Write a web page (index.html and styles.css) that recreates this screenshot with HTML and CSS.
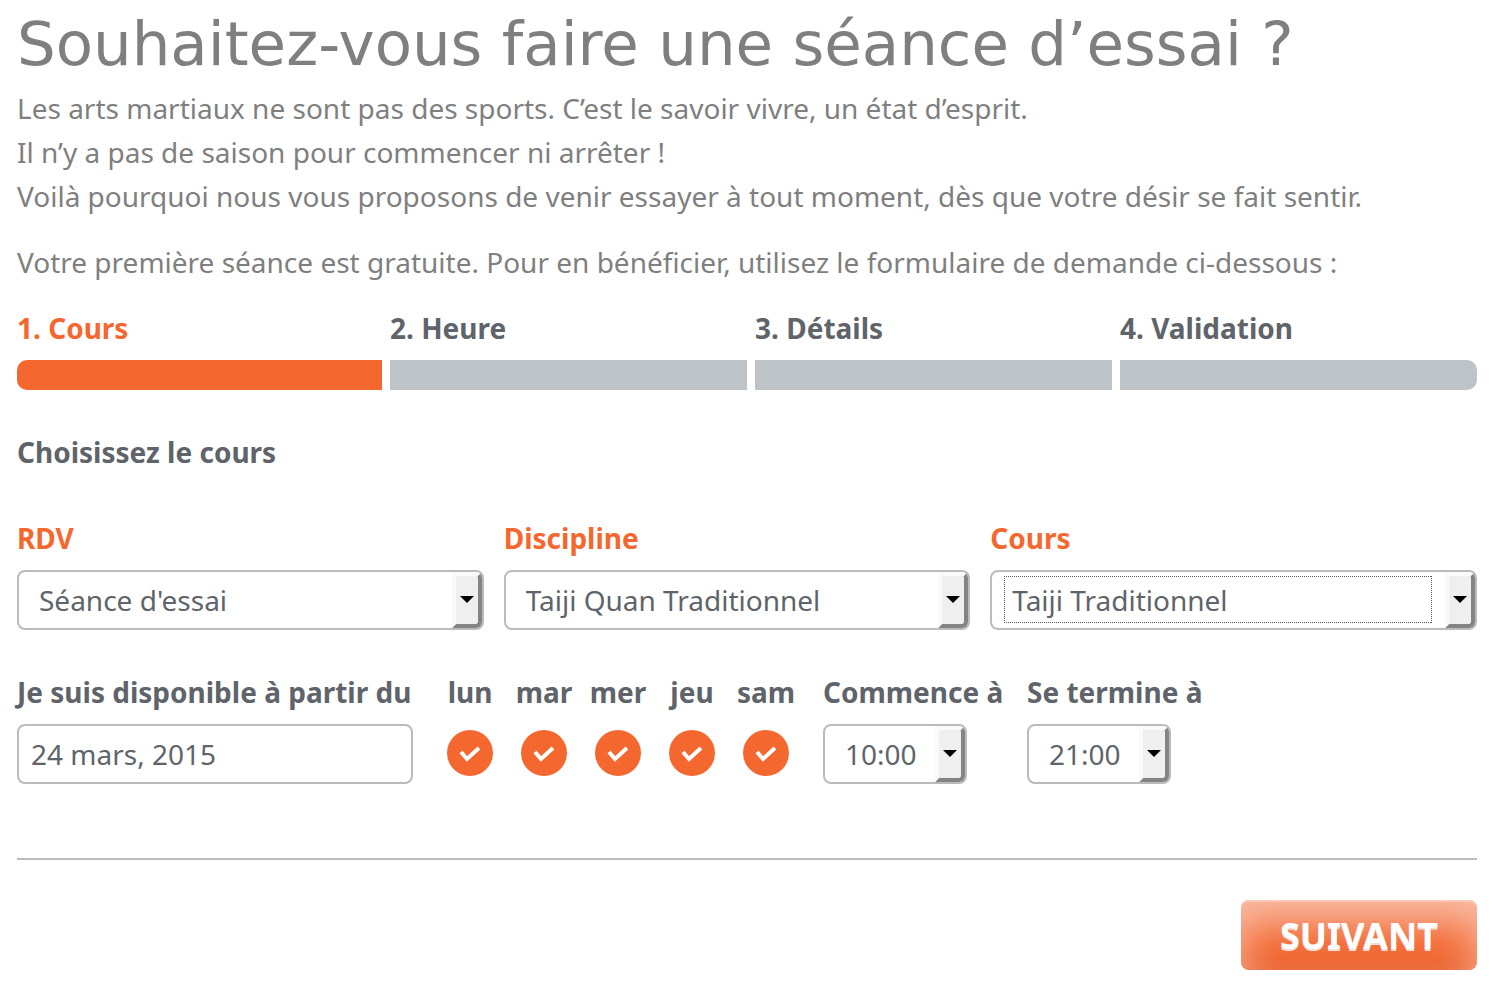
FILE: index.html
```html
<!DOCTYPE html>
<html lang="fr">

<head>
    <meta charset="UTF-8">
    <meta name="viewport" content="width=device-width, initial-scale=1.0">
    <title>Séance d'essai</title>
    <link rel="stylesheet" href="styles.css">
</head>
<body>
    <div class="container">
        <h1>Souhaitez-vous faire une séance d’essai ?</h1>
        <p>Les arts martiaux ne sont pas des sports. C’est le savoir vivre, un état d’esprit.<br>
            Il n’y a pas de saison pour commencer ni arrêter !<br>
            Voilà pourquoi nous vous proposons de venir essayer à tout moment, dès que votre désir se fait sentir.</p>
        <p>Votre première séance est gratuite. Pour en bénéficier, utilisez le formulaire de demande ci-dessous :</p>

        <form class="booking">
            <ol class="steps">
                <li class="step active">1. Cours</li>
                <li class="step">2. Heure</li>
                <li class="step">3. Détails</li>
                <li class="step">4. Validation</li>
            </ol>

            <h2>Choisissez le cours</h2>

            <div class="row">
                <div class="field">
                    <label for="service">RDV</label>
                    <div class="select">
                        <select id="service">
                            <option>Séance d'essai</option>
                        </select>
                    </div>
                </div>
                <div class="field">
                    <label for="discipline">Discipline</label>
                    <div class="select">
                        <select id="discipline">
                            <option>Taiji Quan Traditionnel</option>
                        </select>
                    </div>
                </div>
                <div class="field">
                    <label for="course">Cours</label>
                    <div class="select focused">
                        <select id="course">
                            <option>Taiji Traditionnel</option>
                        </select>
                    </div>
                </div>
            </div>

            <div class="availability">
                <div class="date">
                    <label for="date">Je suis disponible à partir du</label>
                    <input type="text" id="date" value="24 mars, 2015">
                </div>
                <div class="days">
                    <div class="day">
                        <label for="lun">lun</label>
                        <span class="check"><input type="checkbox" id="lun" checked><svg viewBox="0 0 46 46"><path d="M14 22l6 7 12-11"/></svg></span>
                    </div>
                    <div class="day">
                        <label for="mar">mar</label>
                        <span class="check"><input type="checkbox" id="mar" checked><svg viewBox="0 0 46 46"><path d="M14 22l6 7 12-11"/></svg></span>
                    </div>
                    <div class="day">
                        <label for="mer">mer</label>
                        <span class="check"><input type="checkbox" id="mer" checked><svg viewBox="0 0 46 46"><path d="M14 22l6 7 12-11"/></svg></span>
                    </div>
                    <div class="day">
                        <label for="jeu">jeu</label>
                        <span class="check"><input type="checkbox" id="jeu" checked><svg viewBox="0 0 46 46"><path d="M14 22l6 7 12-11"/></svg></span>
                    </div>
                    <div class="day">
                        <label for="sam">sam</label>
                        <span class="check"><input type="checkbox" id="sam" checked><svg viewBox="0 0 46 46"><path d="M14 22l6 7 12-11"/></svg></span>
                    </div>
                </div>
                <div class="time">
                    <label for="from">Commence à</label>
                    <div class="select">
                        <select id="from">
                            <option>10:00</option>
                        </select>
                    </div>
                </div>
                <div class="time">
                    <label for="to">Se termine à</label>
                    <div class="select">
                        <select id="to">
                            <option>21:00</option>
                        </select>
                    </div>
                </div>
            </div>

            <div class="actions">
                <button type="button" class="next-button">SUIVANT</button>
            </div>
        </form>
    </div>
</body>
</html>
```

FILE: styles.css
```css
*,
*::before,
*::after {
    box-sizing: border-box;
}

body {
    margin: 0;
    background-color: #fff;
    color: #7f7f7f;
    font-family: "Noto Sans", sans-serif;
    font-size: 28px;
    line-height: 44px;
}

.container {
    padding: 12px 19px 24px 17px;
}

h1 {
    margin: 0 0 10px;
    font-family: "DejaVu Sans", sans-serif;
    font-size: 61px;
    font-weight: normal;
    line-height: 64px;
    white-space: nowrap;
}

p {
    margin: 0 0 22px;
}

.booking {
    color: #5f646a;
}

.steps {
    display: grid;
    grid-template-columns: repeat(4, 1fr);
    margin: 0 0 40px;
    padding: 0;
    list-style: none;
}

.step {
    font-weight: bold;
}

.step::after {
    content: "";
    display: block;
    height: 30px;
    margin-top: 10px;
    background-color: #bdc3c7;
}

.step + .step {
    padding-left: 8px;
}

.step:first-child::after {
    border-radius: 10px 0 0 10px;
}

.step:last-child::after {
    border-radius: 0 10px 10px 0;
}

.step.active {
    color: #f46830;
}

.step.active::after {
    background-color: #f46830;
}

h2 {
    margin: 0 0 42px;
    font-size: 28px;
    line-height: 44px;
}

label {
    display: block;
    margin-bottom: 10px;
    font-weight: bold;
    white-space: nowrap;
}

.row {
    display: grid;
    grid-template-columns: repeat(3, 1fr);
    margin-bottom: 40px;
}

.field {
    padding-right: 20px;
}

.field:last-child {
    padding-right: 0;
}

.field label {
    color: #f46830;
}

input[type="text"],
select {
    display: block;
    width: 100%;
    height: 60px;
    margin: 0;
    padding: 0 12px;
    border: 2px solid #bbb;
    border-radius: 8px;
    background-color: #fff;
    color: #5f646a;
    font-family: inherit;
    font-size: 28px;
}

select {
    appearance: none;
    padding: 0 32px 0 20px;
}

.select {
    position: relative;
}

/* raised button at the end of the drop-down */
.select::after {
    content: "";
    position: absolute;
    top: 2px;
    right: 2px;
    bottom: 2px;
    width: 30px;
    border: 4px solid;
    border-color: #fafafa #848484 #848484 #fafafa;
    border-radius: 0 6px 6px 0;
    background-color: #efefef;
    pointer-events: none;
}

.select::before {
    content: "";
    position: absolute;
    z-index: 1;
    top: 26px;
    right: 10px;
    border: 7px solid transparent;
    border-top-color: #000;
    border-bottom: 0;
    pointer-events: none;
}

/* dotted focus frame around the value */
.focused select {
    outline: none;
    background-image:
        repeating-linear-gradient(90deg, #555 0 1px, transparent 1px 2px),
        repeating-linear-gradient(90deg, #555 0 1px, transparent 1px 2px),
        repeating-linear-gradient(#555 0 1px, transparent 1px 2px),
        repeating-linear-gradient(#555 0 1px, transparent 1px 2px);
    background-repeat: no-repeat;
    background-size: calc(100% - 55px) 1px, calc(100% - 55px) 1px, 1px 47px, 1px 47px;
    background-position: 12px 4px, 12px 50px, 12px 4px, right 43px top 4px;
}

.availability {
    display: flex;
    gap: 20px;
    padding-bottom: 74px;
    border-bottom: 2px solid #bbb;
}

.date {
    width: 396px;
}

.days {
    display: flex;
}

.day {
    width: 74px;
    text-align: center;
}

.check {
    display: block;
    position: relative;
    width: 46px;
    height: 46px;
    margin: 16px auto 0;
}

.check input {
    appearance: none;
    display: block;
    width: 46px;
    height: 46px;
    margin: 0;
    border: 2px solid #f46830;
    border-radius: 50%;
    cursor: pointer;
}

.check input:checked {
    background-color: #f46830;
}

.check svg {
    position: absolute;
    top: 0;
    left: 0;
    width: 46px;
    height: 46px;
    fill: none;
    stroke: #fff;
    stroke-width: 4px;
    pointer-events: none;
}

.time {
    width: 184px;
}

.time .select {
    width: 144px;
}

.actions {
    display: flex;
    justify-content: flex-end;
    padding-top: 40px;
}

.next-button {
    height: 70px;
    padding: 0 39px;
    border: 0;
    border-radius: 8px;
    background: linear-gradient(#f57c4c, #f46a34 60%, #ea602b);
    box-shadow: inset 0 2px 0 rgba(255, 255, 255, 0.3), inset 0 20px 40px rgba(250, 205, 190, 0.8);
    color: #fff;
    font-family: inherit;
    font-size: 36px;
    font-weight: bold;
    text-shadow: 0 2px 0 #f6ddd4;
    cursor: pointer;
}
```
